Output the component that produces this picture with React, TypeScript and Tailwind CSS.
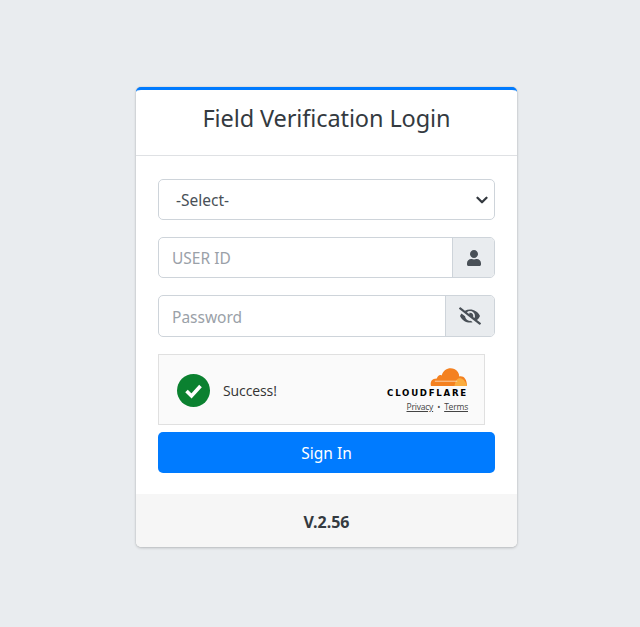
import { FaUser, FaEyeSlash } from "react-icons/fa";

const font = "font-['Noto_Sans','Open_Sans',sans-serif]";

export default function App() {
  return (
    <div className={`min-h-[627px] bg-[#e9ecef] pt-[87px] pl-[136px] ${font}`}>
      <div className="flex w-[381px] h-[460px] flex-col overflow-hidden rounded-[5px] border-t-[3px] border-t-[#007bff] bg-white shadow-[0_0_1px_rgba(0,0,0,0.25),0_1px_3px_rgba(0,0,0,0.2)]">
        <div className="flex h-[66px] shrink-0 items-center justify-center border-b border-[#dfe1e4]">
          <h1 className="pb-[7px] text-[23.5px] leading-none tracking-[-0.1px] text-[#343a40]">Field Verification Login</h1>
        </div>
        <div className="flex flex-1 flex-col px-[22px] pt-[23px]">
          <div className="flex h-[41px] items-center justify-between rounded-[5px] border border-[#ced4da] pl-[17px] pr-[5px]">
            <span className="pt-[2px] text-[15.5px] text-[#495057]">-Select-</span>
            <svg width="12" height="12" viewBox="0 0 16 16" fill="none" stroke="#343a40" strokeWidth="3" strokeLinecap="round" strokeLinejoin="round" className="mr-[1px]">
              <path d="M2 5l6 6 6-6" />
            </svg>
          </div>
          <div className="mt-[17px] flex h-[41px] overflow-hidden rounded-[5px] border border-[#ced4da]">
            <div className="flex flex-1 items-center pl-[13px] pt-[2px] text-[15.5px] text-[#9aa1a8]">USER ID</div>
            <div className="flex w-[42px] items-center justify-center border-l border-[#ced4da] bg-[#e9ecef]">
              <FaUser className="h-[16px] w-[16px] text-[#495057]" />
            </div>
          </div>
          <div className="mt-[17px] flex h-[42px] overflow-hidden rounded-[5px] border border-[#ced4da]">
            <div className="flex flex-1 items-center pl-[13px] pt-[3px] text-[15.5px] text-[#9aa1a8]">Password</div>
            <div className="flex w-[49px] items-center justify-center border-l border-[#ced4da] bg-[#e9ecef]">
              <FaEyeSlash className="h-[18px] w-[22px] text-[#495057]" />
            </div>
          </div>
          <div className="mt-[17px] flex h-[71px] w-[327px] items-center justify-between border border-[#e0e0e0] bg-[#fafafa] pl-[18px] pr-[16px] font-['Open_Sans',sans-serif]">
            <div className="flex items-center gap-[13px] pt-[2px]">
              <svg width="33" height="33" viewBox="0 0 33 33">
                <circle cx="16.5" cy="16.5" r="16.5" fill="#0b8130" />
                <path d="M9.5 17l5 5 9-10" fill="none" stroke="#fff" strokeWidth="3.6" />
              </svg>
              <span className="text-[14px] tracking-[-0.1px] text-[#333]">Success!</span>
            </div>
            <div className="flex flex-col items-end">
              <svg width="39" height="20" viewBox="0 0 40 19" preserveAspectRatio="none">
                <path d="M2 18c-1-4 1-7 6-7 1-3 3-4 5-3 2-6 8-8 13-6 3 1 5 4 5 7 4-1 8 2 8 9z" fill="#f48120" />
                <path d="M26 18c1-4 2-6 4-7 3-1 7 1 9 7z" fill="#faad3f" />
                <path d="M6 13.5h23" stroke="#fbe3c8" strokeWidth="0.8" />
              </svg>
              <span className="font-['DejaVu_Sans',sans-serif] text-[8.6px] leading-[12px] font-bold tracking-[1.75px] text-black">CLOUDFLARE</span>
              <div className="mt-[3px] flex items-center gap-[4px] text-[8.5px] leading-[10px] tracking-[-0.2px] text-[#444]">
                <span className="underline">Privacy</span>
                <span>•</span>
                <span className="underline">Terms</span>
              </div>
            </div>
          </div>
          <button className="mt-[7px] h-[41px] w-full rounded-[5px] bg-[#007bff] pt-[2px] text-[15.5px] text-white">Sign In</button>
        </div>
        <div className="flex h-[53px] shrink-0 items-center justify-center bg-[#f6f6f6]">
          <span className="pt-[2px] text-[16px] font-bold text-[#343a40]">V.2.56</span>
        </div>
      </div>
    </div>
  );
}
